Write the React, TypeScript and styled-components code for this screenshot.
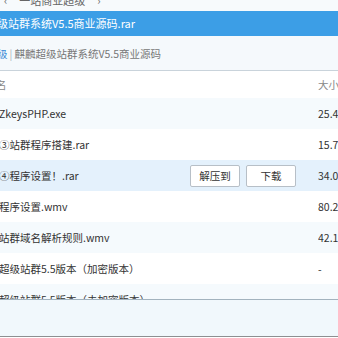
import styled, { createGlobalStyle } from "styled-components";

const GlobalStyle = createGlobalStyle`
  html, body {
    margin: 0;
    padding: 0;
    overflow: hidden;
    background: #ffffff;
  }
  body {
    font-family: "Noto Sans CJK SC", "Noto Sans", sans-serif;
  }
`;

interface IFile {
    name: string;
    size: string;
}

const files: IFile[] = [
    { name: "ZkeysPHP.exe", size: "25.4M" },
    { name: "③站群程序搭建.rar", size: "15.7M" },
    { name: "④程序设置！.rar", size: "34.0M" },
    { name: "程序设置.wmv", size: "80.2M" },
    { name: "站群域名解析规则.wmv", size: "42.1M" },
    { name: "超级站群5.5版本（加密版本）", size: "-" },
    { name: "超级站群5.5版本（未加密版本）", size: "-" },
];

const selected = 2;

export default function App() {
    return (
        <Page>
            <GlobalStyle />
            <TopStrip>
                <TopLine>
                    <span>‹</span>
                    <span>一站商业超级</span>
                    <span>›</span>
                </TopLine>
            </TopStrip>
            <TitleBar>级站群系统V5.5商业源码.rar</TitleBar>
            <Crumbs>
                <CrumbLink>级</CrumbLink>
                <CrumbSep>|</CrumbSep>
                <span>麒麟超级站群系统V5.5商业源码</span>
            </Crumbs>
            <Header>
                <span>名</span>
                <span />
                <SizeCell>大小</SizeCell>
            </Header>
            <List>
                {files.map((f, i) => (
                    <Row key={f.name} striped={i % 2 === 0} active={i === selected}>
                        <Name>{f.name}</Name>
                        {i === selected ? (
                            <Actions>
                                <Btn>解压到</Btn>
                                <Btn>下载</Btn>
                            </Actions>
                        ) : <span />}
                        <SizeCell>{f.size}</SizeCell>
                    </Row>
                ))}
            </List>
            <Panel />
            <BottomBar>
                <span>文件列表</span>
                <span>解压缩设置</span>
            </BottomBar>
        </Page>
    );
}

const Page = styled.div`
  width: 338px;
  height: 338px;
  overflow: hidden;
  display: flex;
  flex-direction: column;
  background: #fff;
`;

const TopStrip = styled.div`
  height: 11px;
  overflow: hidden;
  background: #f7fafc;
  flex-shrink: 0;
`;

const TopLine = styled.div`
  margin-top: -8px;
  height: 16px;
  line-height: 16px;
  display: flex;
  gap: 12px;
  padding-left: 4px;
  font-size: 11px;
  color: #666;
`;

const TitleBar = styled.div`
  height: 25px;
  flex-shrink: 0;
  background: #3c9ee6;
  color: #fff;
  font-size: 11px;
  line-height: 25px;
  text-indent: -3px;
  white-space: nowrap;
  overflow: hidden;
`;

const Crumbs = styled.div`
  height: 34px;
  flex-shrink: 0;
  background: #f5f9fc;
  border-bottom: 1px solid #c9d3db;
  display: flex;
  align-items: center;
  gap: 4px;
  font-size: 10.5px;
  color: #777;
  text-indent: -3px;
  white-space: nowrap;
`;

const CrumbLink = styled.span`
  color: #3a8ad6;
`;

const CrumbSep = styled.span`
  color: #aab4bd;
  margin: 0 1px;
`;

const Header = styled.div`
  height: 27px;
  flex-shrink: 0;
  display: grid;
  grid-template-columns: 1fr auto 20px;
  align-items: center;
  font-size: 10.5px;
  color: #888;
  span:first-child {
    margin-left: -4px;
  }
`;

const List = styled.div`
  height: 201px;
  flex-shrink: 0;
  overflow: hidden;
`;

const Row = styled.div<{ striped: boolean; active: boolean }>`
  height: 31px;
  display: grid;
  grid-template-columns: 1fr auto 20px;
  align-items: center;
  background: ${(p) => (p.active ? "#e4f1fc" : p.striped ? "#f5fafd" : "#ffffff")};
  font-size: 10.5px;
  color: #333;
`;

const Name = styled.span`
  white-space: nowrap;
  margin-left: -1px;
`;

const Actions = styled.div`
  display: flex;
  gap: 6px;
  margin-right: 22px;
`;

const Btn = styled.button`
  width: 50px;
  height: 22px;
  padding: 0;
  background: #fff;
  border: 1px solid #b7bfc7;
  border-radius: 2px;
  font-family: inherit;
  font-size: 10.5px;
  color: #333;
`;

const SizeCell = styled.span`
  white-space: nowrap;
  overflow: hidden;
`;

const Panel = styled.div`
  height: 36px;
  flex-shrink: 0;
  background: #f1f8fc;
  border-top: 1px solid #a3b3be;
`;

const BottomBar = styled.div`
  flex: 1;
  border-top: 1px solid #8d8f91;
  display: flex;
  justify-content: space-between;
  padding: 0 40px 0 2px;
  font-size: 10px;
  line-height: 12px;
  color: #555;
  overflow: hidden;
`;
